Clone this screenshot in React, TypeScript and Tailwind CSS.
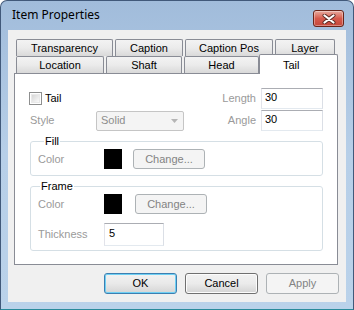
import React from "react";

const TabBtn = ({ label, w }: { label: string; w: string }) => (
  <div
    className={`${w} h-[17px] flex items-center justify-center border border-b-0 border-[#898c95] rounded-t-[2px] bg-gradient-to-b from-[#f3f3f3] via-[#ebebeb] to-[#d9d9d9] text-black`}
  >
    {label}
  </div>
);

const GrayBtn = ({ w, label }: { w: string; label: string }) => (
  <div
    className={`${w} h-[20px] flex items-center justify-center rounded-[3px] border border-[#adb2b5] bg-[#f4f4f4] text-[#838383]`}
  >
    {label}
  </div>
);

export default function App() {
  return (
    <div className="w-[354px] h-[310px] flex flex-col rounded-t-[7px] border border-[#41597a] border-b-[#2a8b9b] bg-gradient-to-b from-[#a1bcdb] via-[#b7cfe8] to-[#bad2ea] overflow-hidden font-['Liberation_Sans',Arial,sans-serif] text-[11px] leading-[13px]">
      {/* title bar */}
      <div className="h-[29px] flex items-start justify-between pl-[11px] pr-[9px]">
        <span className="mt-[6px] font-['Noto_Sans',sans-serif] text-[12px] leading-[16px] text-black">
          Item Properties
        </span>
        <div className="mt-[9px] w-[31px] h-[17px] flex items-center justify-center rounded-[3px] border border-[#6a2419] bg-gradient-to-b from-[#e6aa9f] via-[#d6594c] to-[#c4473a] shadow-[inset_0_0_0_1px_rgba(255,255,255,0.35)]">
          <svg width="14" height="10" viewBox="0 0 14 10">
            <path d="M2.5 1.5 L11.5 8.5 M11.5 1.5 L2.5 8.5" stroke="#5a2a24" strokeWidth="4" strokeLinecap="round" />
            <path d="M2.5 1.5 L11.5 8.5 M11.5 1.5 L2.5 8.5" stroke="#ffffff" strokeWidth="2.2" strokeLinecap="round" />
          </svg>
        </div>
      </div>

      {/* client */}
      <div className="ml-[7px] w-[338px] h-[272px] bg-[#f0f0f0] pt-[9px] px-[6px] flex flex-col">
        <div className="flex gap-[2px] pl-[2px] h-[17px]">
          <TabBtn label="Transparency" w="w-[97px]" />
          <TabBtn label="Caption" w="w-[68px]" />
          <TabBtn label="Caption Pos" w="w-[88px]" />
          <TabBtn label="Layer" w="w-[60px]" />
        </div>
        <div className="flex items-end gap-[2px] pl-[2px] h-[17px]">
          <TabBtn label="Location" w="w-[88px]" />
          <TabBtn label="Shaft" w="w-[76px]" />
          <TabBtn label="Head" w="w-[75px]" />
          <div className="relative z-10 -ml-[2px] -mb-[1px] w-[79px] h-[20px] border border-b-0 border-[#898c95] rounded-t-[2px] bg-white pl-[23px] pt-[4px] text-black">
            Tail
          </div>
        </div>

        {/* panel */}
        <div className="w-[324px] h-[192px] border border-[#898c95] bg-white pt-[14px] px-[14px] flex flex-col">
          <div className="h-[22px] flex items-start justify-between">
            <div className="h-[21px] flex items-center gap-[3px] text-black">
              <div className="w-[13px] h-[13px] border border-[#8e8f8f] p-[1px] bg-white">
                <div className="w-full h-full bg-gradient-to-br from-[#d6d6d6] to-[#fafafa] border border-[#e9e9e9]" />
              </div>
              <span>Tail</span>
            </div>
            <div className="flex items-center gap-[5px]">
              <span className="text-[#9a9a9a]">Length</span>
              <div className="w-[62px] h-[21px] border border-[#abadb3] border-l-[#e2e3ea] border-r-[#dbdfe6] border-b-[#e3e9ef] bg-white pl-[3px] pt-[2px] text-black">
                30
              </div>
            </div>
          </div>
          <div className="h-[21px] flex items-center justify-between">
            <div className="flex items-center">
              <span className="w-[67px] pl-[1px] text-[#9a9a9a]">Style</span>
              <div className="w-[88px] h-[20px] flex items-center justify-between rounded-[2px] border border-[#c5c5c5] bg-[#f4f4f4] pl-[4px] pr-[5px] text-[#8d8d8d]">
                <span>Solid</span>
                <svg width="7" height="4" viewBox="0 0 7 4">
                  <path d="M0 0 H7 L3.5 4 Z" fill="#b5b5b5" />
                </svg>
              </div>
            </div>
            <div className="flex items-center gap-[5px]">
              <span className="text-[#9a9a9a]">Angle</span>
              <div className="w-[62px] h-[21px] border border-[#abadb3] border-l-[#e2e3ea] border-r-[#dbdfe6] border-b-[#e3e9ef] bg-white pl-[3px] pt-[2px] text-black">
                30
              </div>
            </div>
          </div>

          <fieldset className="mt-[4px] ml-[1px] w-[293px] rounded-[3px] border border-[#d5dfe5] pl-[7px] pb-[6px]">
            <legend className="ml-[6px] px-[1px] text-black">Fill</legend>
            <div className="pt-[1px] flex items-center">
              <span className="w-[66px] text-[#9a9a9a]">Color</span>
              <div className="w-[18px] h-[20px] bg-black" />
              <div className="ml-[11px]">
                <GrayBtn w="w-[72px]" label="Change..." />
              </div>
            </div>
          </fieldset>

          <fieldset className="mt-[4px] ml-[1px] w-[293px] rounded-[3px] border border-[#d5dfe5] pl-[7px] pb-[4px]">
            <legend className="ml-[2px] px-[1px] text-black">Frame</legend>
            <div className="pt-[1px] flex items-center">
              <span className="w-[66px] text-[#9a9a9a]">Color</span>
              <div className="w-[18px] h-[20px] bg-black" />
              <div className="ml-[13px]">
                <GrayBtn w="w-[72px]" label="Change..." />
              </div>
            </div>
            <div className="mt-[9px] flex items-center">
              <span className="w-[66px] text-[#9a9a9a]">Thickness</span>
              <div className="w-[60px] h-[23px] border border-[#abadb3] border-l-[#e2e3ea] border-r-[#dbdfe6] border-b-[#e3e9ef] bg-white pl-[4px] pt-[3px] text-black">
                5
              </div>
            </div>
          </fieldset>
        </div>

        {/* buttons */}
        <div className="mt-[8px] flex justify-end gap-[8px] pr-[1px]">
          <div className="w-[73px] h-[21px] flex items-center justify-center rounded-[3px] border border-[#3c7fb1] bg-gradient-to-b from-[#f2f2f2] via-[#e9e9e9] to-[#d5d5d5] shadow-[inset_0_0_0_1px_#6fd0f4] text-black">
            OK
          </div>
          <div className="w-[73px] h-[21px] flex items-center justify-center rounded-[3px] border border-[#707070] bg-gradient-to-b from-[#f2f2f2] via-[#ebebeb] to-[#d3d3d3] shadow-[inset_0_0_0_1px_#fcfcfc] text-black">
            Cancel
          </div>
          <div className="w-[73px] h-[21px] flex items-center justify-center rounded-[3px] border border-[#adb2b5] bg-[#f4f4f4] text-[#838383]">
            Apply
          </div>
        </div>
      </div>
    </div>
  );
}
